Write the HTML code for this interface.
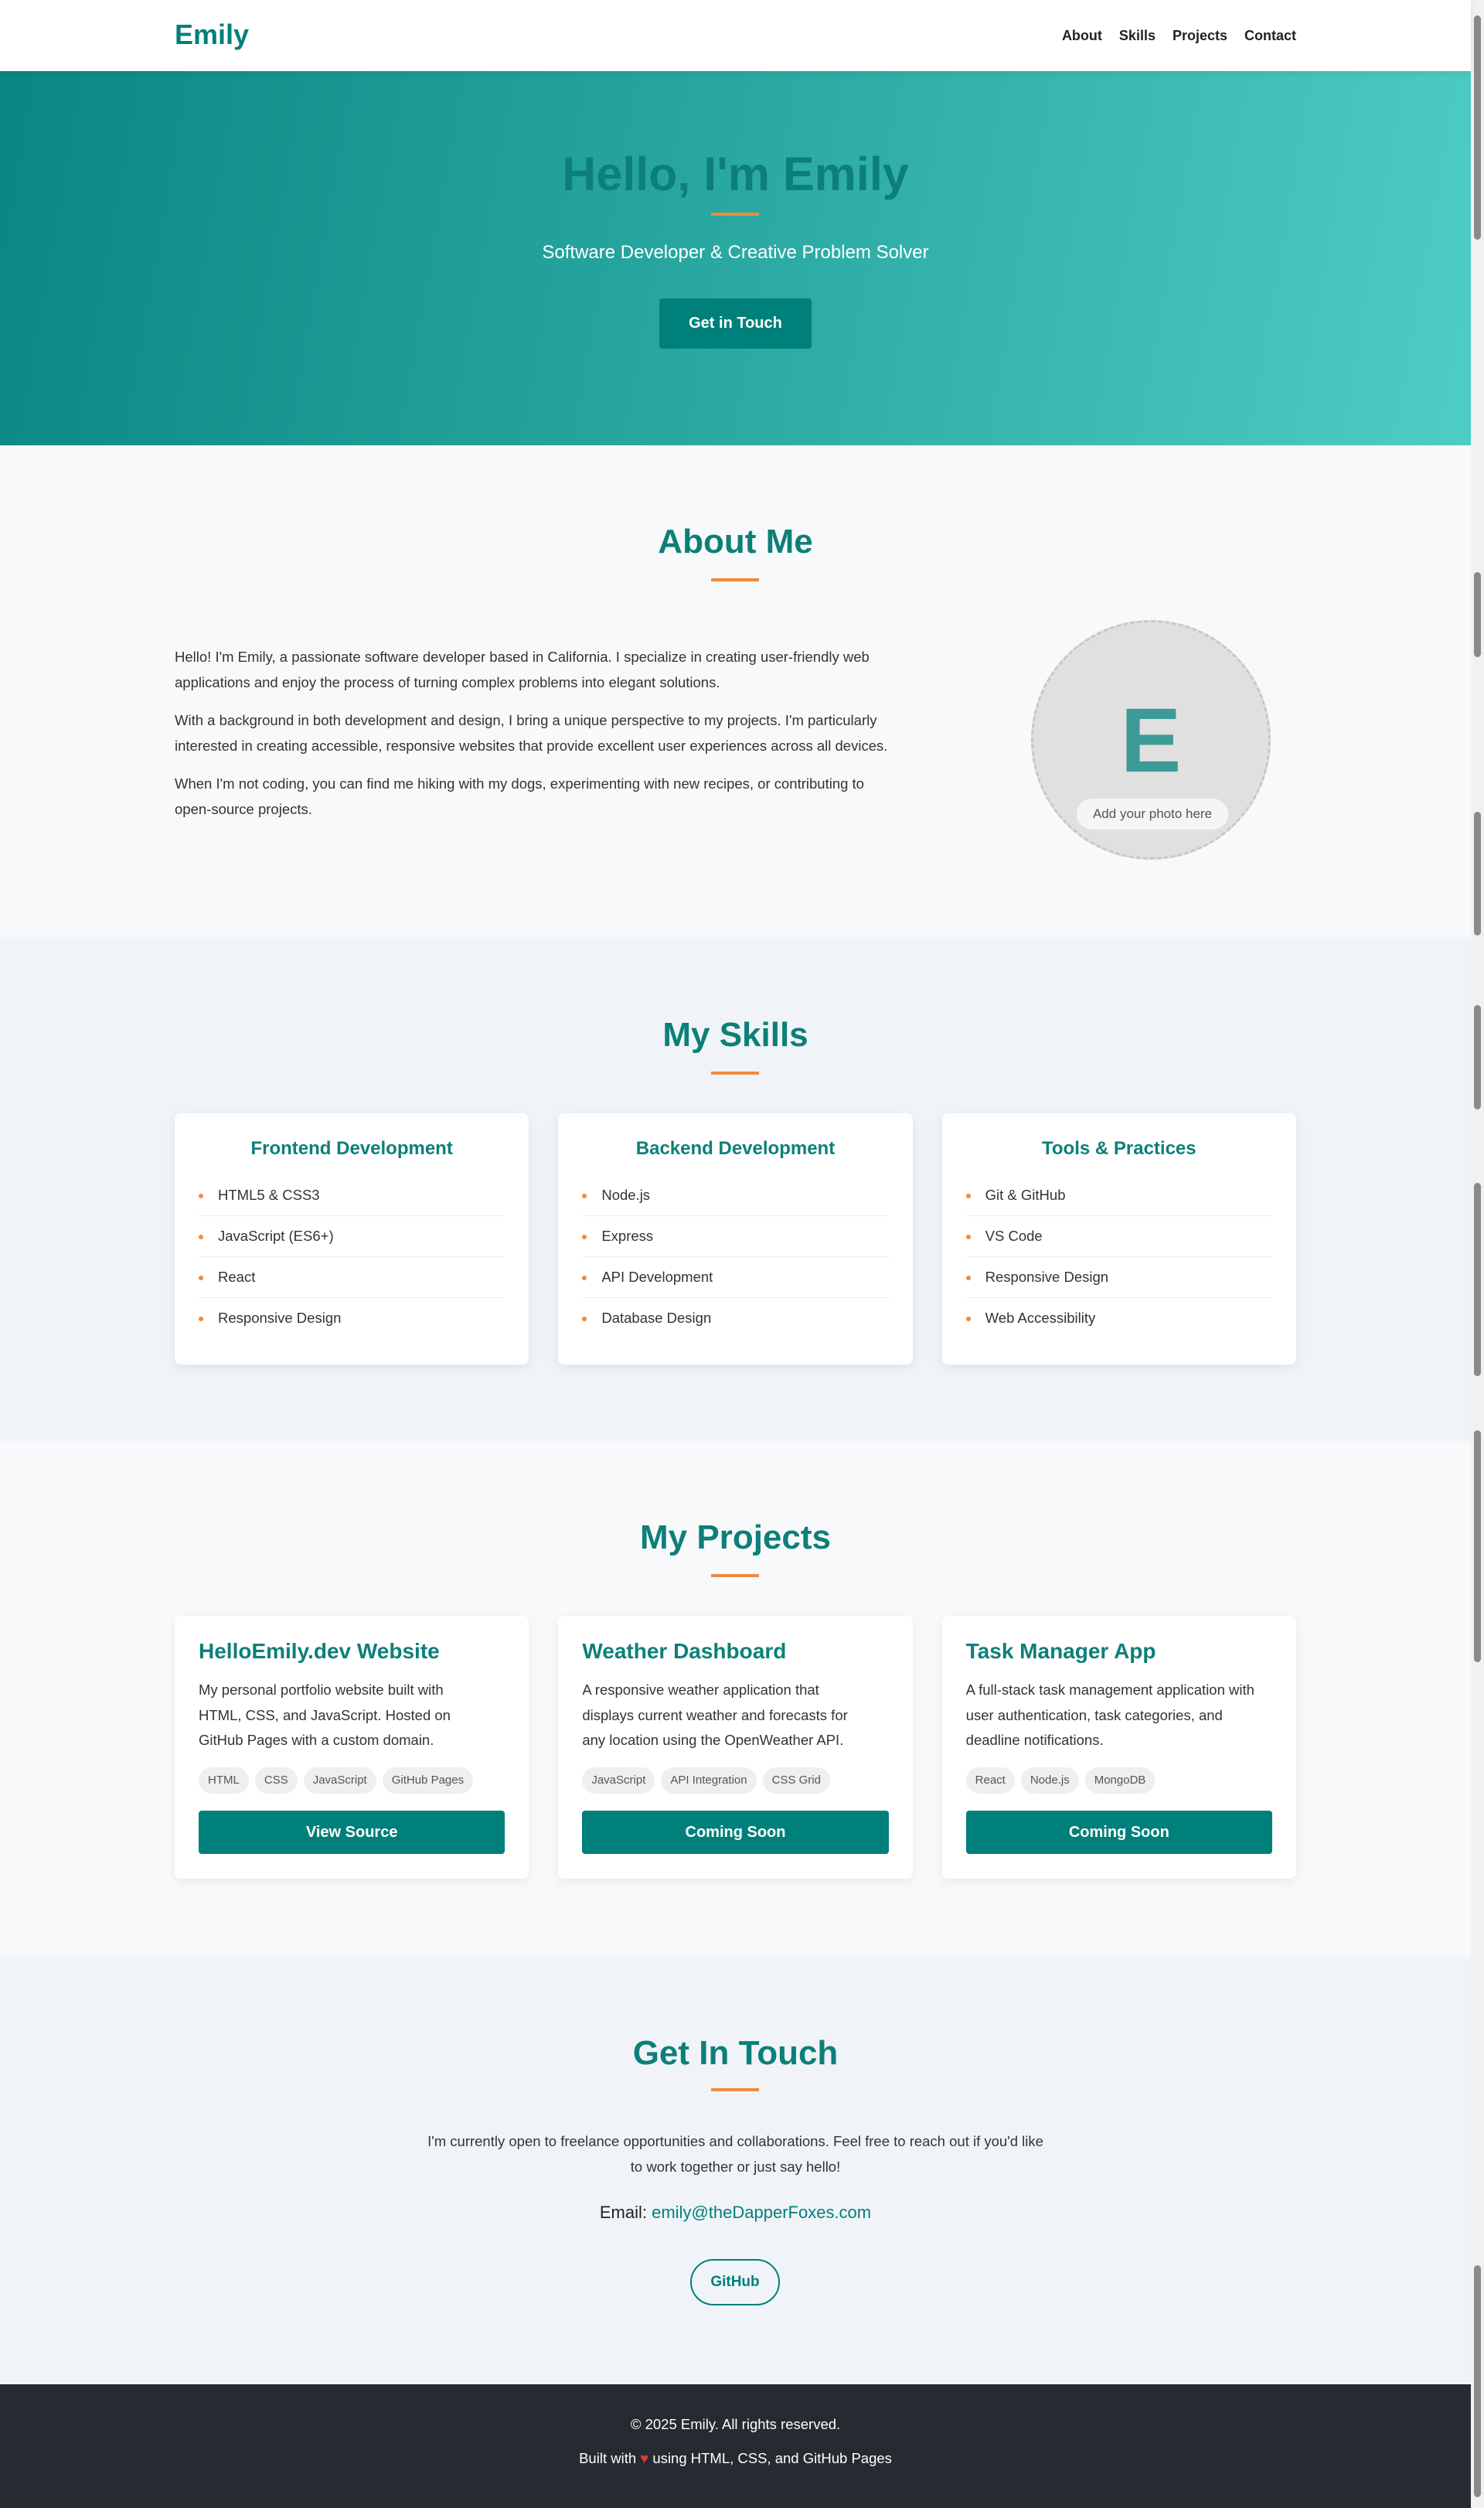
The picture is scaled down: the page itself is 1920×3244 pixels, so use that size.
<!DOCTYPE html>
<html><head><meta charset="utf-8"><style>
*{margin:0;padding:0;box-sizing:border-box}
html,body{width:1920px;height:3244px;overflow:hidden}
body{font-family:"Liberation Sans",sans-serif;color:#333;background:#f7f9fb;position:relative}
.page{width:1903px;position:absolute;left:0;top:0}
.sb{position:absolute;right:0;top:0;width:17px;height:3244px;background:#f1f1f1}
.sb div{position:absolute;left:4px;width:9px;background:#8a8a8a;border-radius:5px}
nav{height:92px;background:#fff;position:relative;box-shadow:0 2px 8px rgba(0,0,0,.08);z-index:2}
.logo{position:absolute;left:226px;top:24px;font-size:36px;font-weight:bold;color:#00807a}
.links{position:absolute;right:226px;top:36px;font-size:18px;font-weight:bold;color:#222}
.links span{margin-left:22px}
.hero{height:484px;background:linear-gradient(100deg,#0a8783 0%,#2aa9a2 50%,#4ecdc4 100%);text-align:center;position:relative}
.hero h1{position:absolute;width:100%;top:98px;font-size:61px;color:#0d7f79;font-weight:bold}
.bar{width:62px;height:4px;background:#f08a3c;margin:0 auto}
.hero .bar{position:absolute;left:920px;top:183px}
.hero p{position:absolute;width:100%;top:221px;font-size:24px;color:#fff}
.hero .btn{position:absolute;left:853px;top:294px;width:197px;height:65px;background:#00807a;color:#fff;font-weight:bold;font-size:20px;line-height:65px;border-radius:4px}
section{position:relative}
h2{font-size:44px;color:#0d7f79;text-align:center;font-weight:bold}
.about{height:636px;background:#f7f9fb}
.about h2{position:absolute;width:100%;top:100px}
.about .bar,.skills .bar,.proj .bar,.contact .bar{position:absolute;left:920px}
.about .bar{top:172px}
.atext{position:absolute;left:226px;top:258px;width:985px;font-size:18.5px;line-height:32.5px;color:#333}
.atext p{margin-bottom:17px}
.nw{white-space:nowrap}
.circle{position:absolute;left:1334px;top:226px;width:310px;height:310px;border-radius:50%;background:#e0e0e0;border:3px dashed #c8c8c8}
.circle .E{position:absolute;width:100%;top:94px;text-align:center;font-size:118px;font-weight:bold;color:#3d9a96;line-height:1}
.circle .ph{position:absolute;left:56px;top:228px;width:196px;height:40px;border-radius:20px;background:#f5f5f5;text-align:center;line-height:40px;font-size:17px;color:#555}
.skills{height:652px;background:#f0f4f8}
.skills h2{position:absolute;width:100%;top:102px}
.skills .bar{top:174px}
.cards{position:absolute;left:226px;top:228px;width:1451px;display:flex;gap:38px}
.card{flex:1;background:#fff;border-radius:8px;box-shadow:0 4px 14px rgba(0,0,0,.07);padding:0 31px}
.skills .card{height:325px}
.skills .card h3{text-align:center;font-size:24px;color:#0d7f79;margin-top:32px;margin-bottom:20px}
.skills li{list-style:none;height:53px;line-height:52px;border-bottom:1px solid #ececec;font-size:18.5px;padding-left:25px;position:relative;color:#333}
.skills li:last-child{border-bottom:none}
.skills li:before{content:"";position:absolute;left:0;top:24px;width:6px;height:6px;border-radius:50%;background:#f08a3c}
.proj{height:667px;background:#f7f9fb}
.proj h2{position:absolute;width:100%;top:100px}
.proj .bar{top:172px}
.proj .cards{top:226px}
.proj .card{height:340px}
.proj h3{font-size:28px;color:#0d7f79;margin-top:30px}
.proj .d{font-size:18.5px;line-height:32.5px;margin-top:18px;height:106px;color:#333;width:375px}
.tags{margin-top:10px;height:34px}
.tags span{display:inline-block;background:#efefef;border-radius:17px;height:34px;line-height:34px;padding:0 12px;font-size:15px;color:#555;margin-right:8px}
.pbtn{margin-top:22px;height:56px;background:#00807a;border-radius:4px;color:#fff;font-weight:bold;font-size:20px;text-align:center;line-height:56px}
.contact{height:553px;background:#f0f4f8;text-align:center}
.contact h2{position:absolute;width:100%;top:100px}
.contact .bar{top:170px}
.contact .t{position:absolute;left:520px;width:863px;top:222px;font-size:18.5px;line-height:33px;color:#333}
.contact .em{position:absolute;width:100%;top:318px;font-size:22px;color:#222}
.contact .em span{color:#00807a}
.gh{position:absolute;left:893px;top:391px;width:116px;height:60px;border:2px solid #00807a;border-radius:30px;line-height:56px;color:#00807a;font-weight:bold;font-size:19px}
footer{height:160px;background:#262a31;color:#fff;text-align:center;font-size:18.5px;position:relative}
footer p{position:absolute;width:100%}
</style></head><body>
<div class="page">
<nav><div class="logo">Emily</div><div class="links"><span>About</span><span>Skills</span><span>Projects</span><span>Contact</span></div></nav>
<div class="hero"><h1>Hello, I'm Emily</h1><div class="bar"></div><p>Software Developer &amp; Creative Problem Solver</p><div class="btn">Get in Touch</div></div>
<section class="about"><h2>About Me</h2><div class="bar"></div>
<div class="atext"><p>Hello! I'm Emily, a passionate software developer based in California. I specialize in creating user-friendly web applications and enjoy the process of turning complex problems into elegant solutions.</p><p>With a background in both development and design, I bring a unique perspective to my projects. I'm particularly interested in creating accessible, responsive websites that provide excellent user experiences across all devices.</p><p>When I'm not coding, you can find me hiking with my dogs, experimenting with new recipes, or contributing to <span class="nw">open-source</span> projects.</p></div>
<div class="circle"><div class="E">E</div><div class="ph">Add your photo here</div></div></section>
<section class="skills"><h2>My Skills</h2><div class="bar"></div>
<div class="cards">
<div class="card"><h3>Frontend Development</h3><ul><li>HTML5 &amp; CSS3</li><li>JavaScript (ES6+)</li><li>React</li><li>Responsive Design</li></ul></div>
<div class="card"><h3>Backend Development</h3><ul><li>Node.js</li><li>Express</li><li>API Development</li><li>Database Design</li></ul></div>
<div class="card"><h3>Tools &amp; Practices</h3><ul><li>Git &amp; GitHub</li><li>VS Code</li><li>Responsive Design</li><li>Web Accessibility</li></ul></div>
</div></section>
<section class="proj"><h2>My Projects</h2><div class="bar"></div>
<div class="cards">
<div class="card"><h3>HelloEmily.dev Website</h3><div class="d">My personal portfolio website built with HTML, CSS, and JavaScript. Hosted on GitHub Pages with a custom domain.</div><div class="tags"><span>HTML</span><span>CSS</span><span>JavaScript</span><span>GitHub Pages</span></div><div class="pbtn">View Source</div></div>
<div class="card"><h3>Weather Dashboard</h3><div class="d">A responsive weather application that displays current weather and forecasts for any location using the OpenWeather API.</div><div class="tags"><span>JavaScript</span><span>API Integration</span><span>CSS Grid</span></div><div class="pbtn">Coming Soon</div></div>
<div class="card"><h3>Task Manager App</h3><div class="d">A full-stack task management application with user authentication, task categories, and deadline notifications.</div><div class="tags"><span>React</span><span>Node.js</span><span>MongoDB</span></div><div class="pbtn">Coming Soon</div></div>
</div></section>
<section class="contact"><h2>Get In Touch</h2><div class="bar"></div>
<div class="t">I'm currently open to freelance opportunities and collaborations. Feel free to reach out if you'd like<br>to work together or just say hello!</div>
<div class="em">Email: <span>emily@theDapperFoxes.com</span></div>
<div class="gh">GitHub</div></section>
<footer><p style="top:41px">© 2025 Emily. All rights reserved.</p><p style="top:85px">Built with <span style="color:#e53935">♥</span> using HTML, CSS, and GitHub Pages</p></footer>
</div>
<div class="sb"><div style="top:20px;height:290px"></div><div style="top:740px;height:110px"></div><div style="top:1050px;height:160px"></div><div style="top:1300px;height:135px"></div><div style="top:1530px;height:250px"></div><div style="top:1850px;height:300px"></div><div style="top:2930px;height:300px"></div></div>
</body></html>
